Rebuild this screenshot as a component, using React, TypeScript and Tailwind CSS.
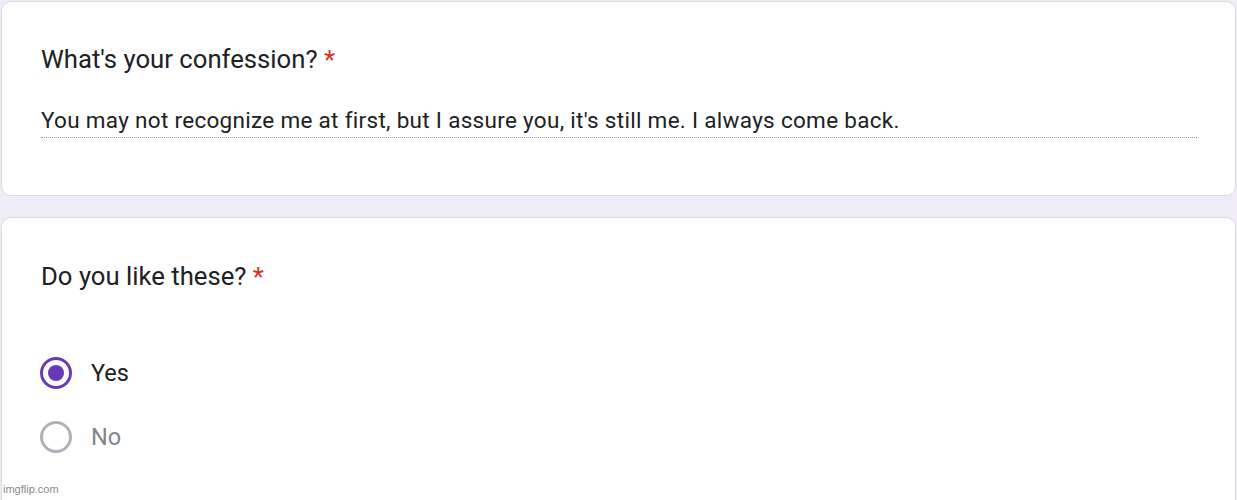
const font = { fontFamily: "Roboto, 'Noto Sans', sans-serif", fontVariantLigatures: "none" as const };

function Radio({ checked }: { checked: boolean }) {
  return (
    <span
      className={
        "flex h-8 w-8 items-center justify-center rounded-full border-[3px] " +
        (checked ? "border-[#673ab7]" : "border-[#aeb2b8]")
      }
    >
      {checked && <span className="h-4 w-4 rounded-full bg-[#673ab7]" />}
    </span>
  );
}

export default function App() {
  return (
    <div className="relative h-[500px] w-[1237px] overflow-hidden bg-[#f0ebf8] p-px" style={font}>
      {/* Text answer card */}
      <div className="h-[195px] rounded-[10px] border border-[#dadce0] bg-white pl-[39px] pr-[38px] pt-[41px]">
        <div className="text-[25.7px] leading-[32px] text-[#202124]">
          What&apos;s your confession? <span className="text-[#d93025]">*</span>
        </div>
        <div className="mt-[31px] border-b border-dotted border-[#9aa0a6] pb-[3px] text-[22.5px] leading-[28px] tracking-[0.3px] text-[#202124]">
          You may not recognize me at first, but I assure you, it&apos;s still me. I always come back.
        </div>
      </div>

      {/* Multiple choice card */}
      <div className="mt-[21px] h-[320px] rounded-[10px] border border-[#dadce0] bg-white px-[38px] pt-[42px]">
        <div className="pl-px text-[25.7px] leading-[32px] text-[#202124]">
          Do you like these? <span className="text-[#d93025]">*</span>
        </div>
        <div className="mt-[65px] flex flex-col gap-8">
          <label className="flex items-center gap-[19px]">
            <Radio checked />
            <span className="text-[23.5px] leading-8 text-[#202124]">Yes</span>
          </label>
          <label className="flex items-center gap-[19px]">
            <Radio checked={false} />
            <span className="text-[23.5px] leading-8 text-[#80868b]">No</span>
          </label>
        </div>
      </div>

      <span
        className="absolute bottom-[3px] left-[3px] text-[11px] text-[#8a8a8a]"
        style={{ fontFamily: "'Liberation Sans', Arial, sans-serif" }}
      >
        imgflip.com
      </span>
    </div>
  );
}
